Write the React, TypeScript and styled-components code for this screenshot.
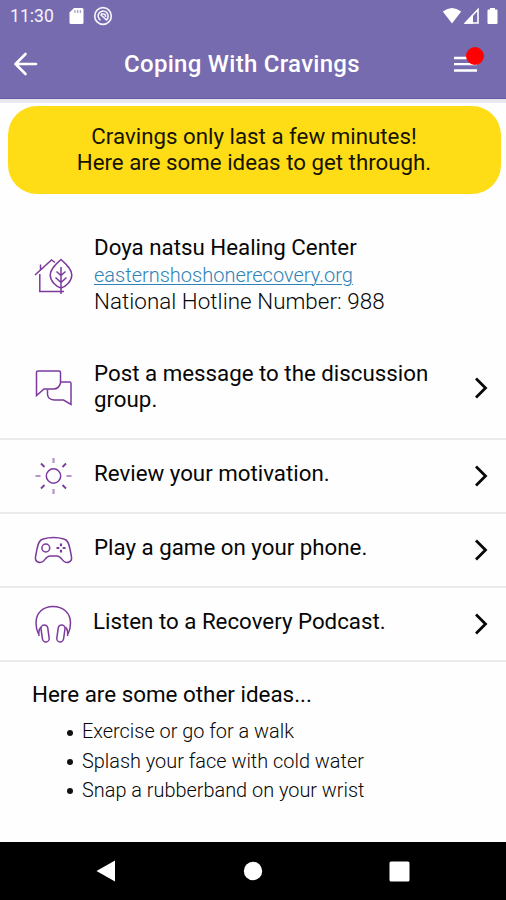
import React from "react";
import styled, { createGlobalStyle } from "styled-components";

const GlobalStyle = createGlobalStyle`
  *, *::before, *::after { box-sizing: border-box; }
  body { margin: 0; background: #fff; }
`;

const Screen = styled.div`
  display: flex;
  flex-direction: column;
  width: 506px;
  height: 900px;
  overflow: hidden;
  background: #fefefe;
  color: #060606;
  font-family: Roboto, "Liberation Sans", sans-serif;
`;

const Header = styled.header`
  flex: none;
  height: 99px;
  background: #776baf;
  border-bottom: 1px solid #6459a4;
  color: #fff;
`;

const HeaderShade = styled.div`
  flex: none;
  height: 4px;
  background: linear-gradient(#e4e4ea, #ebebee);
`;

const StatusBar = styled.div`
  display: flex;
  align-items: center;
  height: 32px;
  padding: 0 7px 0 10px;
`;

const Clock = styled.span`
  width: 59px;
  font-size: 17.6px;
  line-height: 32px;
  color: #f4f2fb;
`;

const StatusIcons = styled.div<{ $gap: number; $end?: boolean }>`
  display: flex;
  align-items: center;
  gap: ${({ $gap }) => $gap}px;
  margin-left: ${({ $end }) => ($end ? "auto" : "0")};
  svg { display: block; }
`;

const AppBar = styled.div`
  display: grid;
  grid-template-columns: 60px 1fr 60px;
  align-items: center;
  height: 64px;
`;

const BarButton = styled.button`
  position: relative;
  display: flex;
  height: 40px;
  padding: 0 0 0 13px;
  align-items: center;
  border: 0;
  background: none;
  color: inherit;
  svg { display: block; }
`;

const MenuButton = styled(BarButton)`
  padding-left: 7px;
`;

const Alert = styled.span`
  position: absolute;
  left: 20px;
  top: 3px;
  width: 18px;
  height: 18px;
  border-radius: 50%;
  background: #fe0000;
`;

const Title = styled.h1`
  margin: 0 0 0 -22px;
  text-align: center;
  font-size: 24px;
  font-weight: 500;
  letter-spacing: 0.28px;
  line-height: 30px;
`;

const Banner = styled.div`
  flex: none;
  height: 88px;
  margin: 3px 5px 0 8px;
  padding: 17px 1px 0 0;
  border-radius: 29px;
  background: #fedd17;
  color: #161300;
  text-align: center;
  font-size: 22.3px;
  line-height: 26.3px;
`;

const Center = styled.section`
  display: flex;
  flex: none;
  height: 143px;
  padding: 40px 0 0 33px;
`;

const IconSlot = styled.div<{ $top?: number }>`
  flex: none;
  width: 60px;
  padding-top: ${({ $top = 0 }) => $top}px;
  color: #7b3a9c;
  svg { display: block; }
`;

const CenterInfo = styled.div`
  display: flex;
  flex-direction: column;
  align-items: flex-start;
  padding-left: 1px;
  font-size: 22.4px;
  font-weight: 300;
  line-height: 27px;
`;

const CenterName = styled.strong`
  font-size: 22.3px;
  font-weight: 400;
`;

const Site = styled.a`
  margin: 1px 0 -1px;
  font-size: 20px;
  color: #2e83b8;
  text-decoration: underline;
  text-underline-offset: 2px;
  text-decoration-thickness: 1px;
`;

const Hotline = styled.span`
  letter-spacing: 0.04px;
`;

const Row = styled.div<{ $height: number }>`
  display: flex;
  flex: none;
  align-items: center;
  height: ${({ $height }) => $height}px;
  padding: 0 17px 0 33px;
  border-bottom: 2px solid #ebebeb;
`;

const RowLabel = styled.span<{ $lift: number; $indent: number }>`
  flex: 1;
  padding-left: ${({ $indent }) => $indent}px;
  padding-bottom: ${({ $lift }) => $lift}px;
  padding-right: 30px;
  font-size: 22.3px;
  font-weight: 400;
  line-height: 26.5px;
`;

const Arrow = styled.svg`
  flex: none;
  display: block;
`;

const Ideas = styled.section`
  flex: 1;
  padding: 18px 0 0 32px;
`;

const IdeasTitle = styled.h2`
  margin: 0 0 9px;
  font-size: 22.4px;
  font-weight: 400;
  line-height: 28px;
`;

const IdeaList = styled.ul`
  margin: 0;
  padding: 0 0 0 35px;
  list-style: none;
`;

const Idea = styled.li`
  display: flex;
  align-items: center;
  gap: 9px;
  height: 29.4px;
  font-size: 19.9px;
  font-weight: 300;
  &::before {
    content: "";
    width: 6px;
    height: 6px;
    margin-top: 2px;
    border-radius: 50%;
    background: #111;
  }
`;

const NavBar = styled.nav`
  display: flex;
  flex: none;
  align-items: center;
  justify-content: space-between;
  height: 58px;
  padding: 0 96px;
  background: #000;
  svg { display: block; }
`;

const line = { fill: "none", stroke: "currentColor", strokeWidth: 1.5 } as const;

const HouseLeafIcon = () => (
  <svg width="40" height="38" viewBox="0 0 40 38" {...line}>
    <path d="M2 18 18.500 3l3.500 2.500M7.500 13V7.500M6.800 17v17.500H31" />
    <path d="M28 2.500c5 4.500 10.800 9.500 10.800 15.500S33 29.500 28 31c-5-1.500-10.800-7-10.800-13S23 7 28 2.500Z" />
    <path d="M28 10v27M23.500 14.500l4.500 4 4.500-4M22.500 20.500l5.500 5 5.500-5" />
  </svg>
);

const ChatIcon = () => (
  <svg width="40" height="38" viewBox="0 0 40 38" {...line}>
    <path d="M3.500 26.500V3.500q0-1.500 1.500-1.500h21q1.500 0 1.500 1.500V14q-1.500 6-7 6H11Z" />
    <path d="M27.500 13H36.500q1.500 0 1.500 1.500v21l-7.500-4.500h-9.500q-6-.5-6.500-5.500v-5" />
  </svg>
);

const SunIcon = () => (
  <svg width="40" height="38" viewBox="0 0 40 38" {...line}>
    <circle cx="20.500" cy="19" r="7.200" />
    <g strokeWidth="1.800">
      <path d="M20.500 1v5M20.500 32v5M2.500 19h5M33.500 19h5" strokeWidth="2.200" opacity=".55" />
      <path d="m8 6.500 3.500 3.500M33 6.500 29.500 10M8 31.500l3.500-3.500M33 31.500 29.500 28" />
    </g>
  </svg>
);

const GameIcon = () => (
  <svg width="40" height="30" viewBox="0 0 40 30" {...line}>
    <path d="M10 4q10.500-3 21 0c4 1 5 5 6 10l1.500 8c.8 5-4.500 7-8 4-2-2-3.500-5-6.500-5h-7c-3 0-4.500 3-6.500 5-3.500 3-8.800 1-8-4L4 14c1-5 2-9 6-10Z" />
    <circle cx="12.800" cy="13" r="3.900" />
    <path d="M28 8.500v2.800M28 14.700v2.800M23.500 13h2.800M29.700 13h2.800" strokeWidth="2.200" />
  </svg>
);

const HeadphonesIcon = () => (
  <svg width="40" height="40" viewBox="0 0 40 40" {...line}>
    <path d="M5.500 30Q3 25 3 19C3 8.500 10.500 2.500 20 2.500s17.500 6 17.500 16.500q0 6-2.500 11" />
    <rect x="8.700" y="21" width="6.800" height="17" rx="3.400" transform="rotate(-8 12 29.500)" />
    <rect x="24.500" y="21" width="6.800" height="17" rx="3.400" transform="rotate(8 28 29.500)" />
    <path d="M8 23q-3 3.500-2 9M32.500 23q3 3.500 2 9" />
  </svg>
);

const Chevron = () => (
  <Arrow width="16" height="24" viewBox="0 0 16 24" fill="none" stroke="#080808" strokeWidth="2.800">
    <path d="m3 2.500 9.500 9.500L3 21.500" />
  </Arrow>
);

const rows = [
  { label: "Post a message to the discussion group.", icon: <ChatIcon />, height: 103, lift: 3, indent: 1 },
  { label: "Review your motivation.", icon: <SunIcon />, height: 74, lift: 5, indent: 1 },
  { label: "Play a game on your phone.", icon: <GameIcon />, height: 74, lift: 5, indent: 1 },
  { label: "Listen to a Recovery Podcast.", icon: <HeadphonesIcon />, height: 74, lift: 5, indent: 0 },
];

const ideas = ["Exercise or go for a walk", "Splash your face with cold water", "Snap a rubberband on your wrist"];

export default function App() {
  return (
    <Screen>
      <GlobalStyle />
      <Header>
        <StatusBar>
          <Clock>11:30</Clock>
          <StatusIcons $gap={9}>
            <svg width="15" height="18" viewBox="0 0 15 18">
              <path d="M5 1h8a1.500 1.500 0 0 1 1.500 1.500v13A1.500 1.500 0 0 1 13 17H2A1.500 1.500 0 0 1 .5 15.500V5.500Z" fill="#fff" />
              <path d="M6 3v3M8.700 3v3M11.400 3v3" stroke="#aaa3cc" strokeWidth="1.300" />
            </svg>
            <svg width="20" height="20" viewBox="0 0 20 20" fill="none" stroke="#f4f2fb">
              <circle cx="10" cy="10" r="8.300" strokeWidth="1.700" />
              <path d="M13.500 13.800a5 5 0 1 0-6 .500M8 8h2.500a2 2 0 0 1 2 2v1M7.500 8.500l6.500 6" strokeWidth="1.600" />
            </svg>
          </StatusIcons>
          <StatusIcons $gap={1} $end>
            <svg width="20" height="18" viewBox="0 0 20 18">
              <path d="M.8 4.500Q10-2.500 19.200 4.500L10 16.500Z" fill="#fff" />
            </svg>
            <svg width="17" height="18" viewBox="0 0 17 18">
              <path d="M2.500 16H15V2.500Z" fill="none" stroke="#fff" strokeWidth="1.600" />
              <path d="M1 16.800 10 7v9.800Z" fill="#fff" />
            </svg>
            <svg width="18" height="18" viewBox="0 0 18 18">
              <path d="M9 1h5v1.500h1.500q1 0 1 1V16q0 1-1 1h-8q-1 0-1-1V3.500q0-1 1-1H9Z" fill="#fff" />
            </svg>
          </StatusIcons>
        </StatusBar>
        <AppBar>
          <BarButton aria-label="Back">
            <svg width="26" height="26" viewBox="0 0 26 26" fill="none" stroke="#fff" strokeWidth="2.600" strokeLinecap="round">
              <path d="M2.500 13H23M12.500 3 2.500 13l10 10" />
            </svg>
          </BarButton>
          <Title>Coping With Cravings</Title>
          <MenuButton aria-label="Menu">
            <svg width="25" height="18" viewBox="0 0 25 18" stroke="#fff" strokeWidth="2.300">
              <path d="M1 3h23M1 9.200h23M1 15.500h23" />
            </svg>
            <Alert />
          </MenuButton>
        </AppBar>
      </Header>
      <HeaderShade />
      <Banner>
        Cravings only last a few minutes!
        <br />
        Here are some ideas to get through.
      </Banner>
      <Center>
        <IconSlot $top={23}>
          <HouseLeafIcon />
        </IconSlot>
        <CenterInfo>
          <CenterName>Doya natsu Healing Center</CenterName>
          <Site>easternshoshonerecovery.org</Site>
          <Hotline>National Hotline Number: 988</Hotline>
        </CenterInfo>
      </Center>
      {rows.map((row) => (
        <Row key={row.label} $height={row.height}>
          <IconSlot>{row.icon}</IconSlot>
          <RowLabel $lift={row.lift} $indent={row.indent}>{row.label}</RowLabel>
          <Chevron />
        </Row>
      ))}
      <Ideas>
        <IdeasTitle>Here are some other ideas...</IdeasTitle>
        <IdeaList>
          {ideas.map((idea) => (
            <Idea key={idea}>{idea}</Idea>
          ))}
        </IdeaList>
      </Ideas>
      <NavBar>
        <svg width="20" height="22" viewBox="0 0 20 22" fill="#fff">
          <path d="M.5 11 19 .5v21Z" />
        </svg>
        <svg width="20" height="20" viewBox="0 0 20 20" fill="#fff">
          <circle cx="10" cy="10" r="9.200" />
        </svg>
        <svg width="21" height="21" viewBox="0 0 21 21" fill="#fff">
          <rect x=".5" y=".5" width="20" height="20" rx="1.500" />
        </svg>
      </NavBar>
    </Screen>
  );
}
